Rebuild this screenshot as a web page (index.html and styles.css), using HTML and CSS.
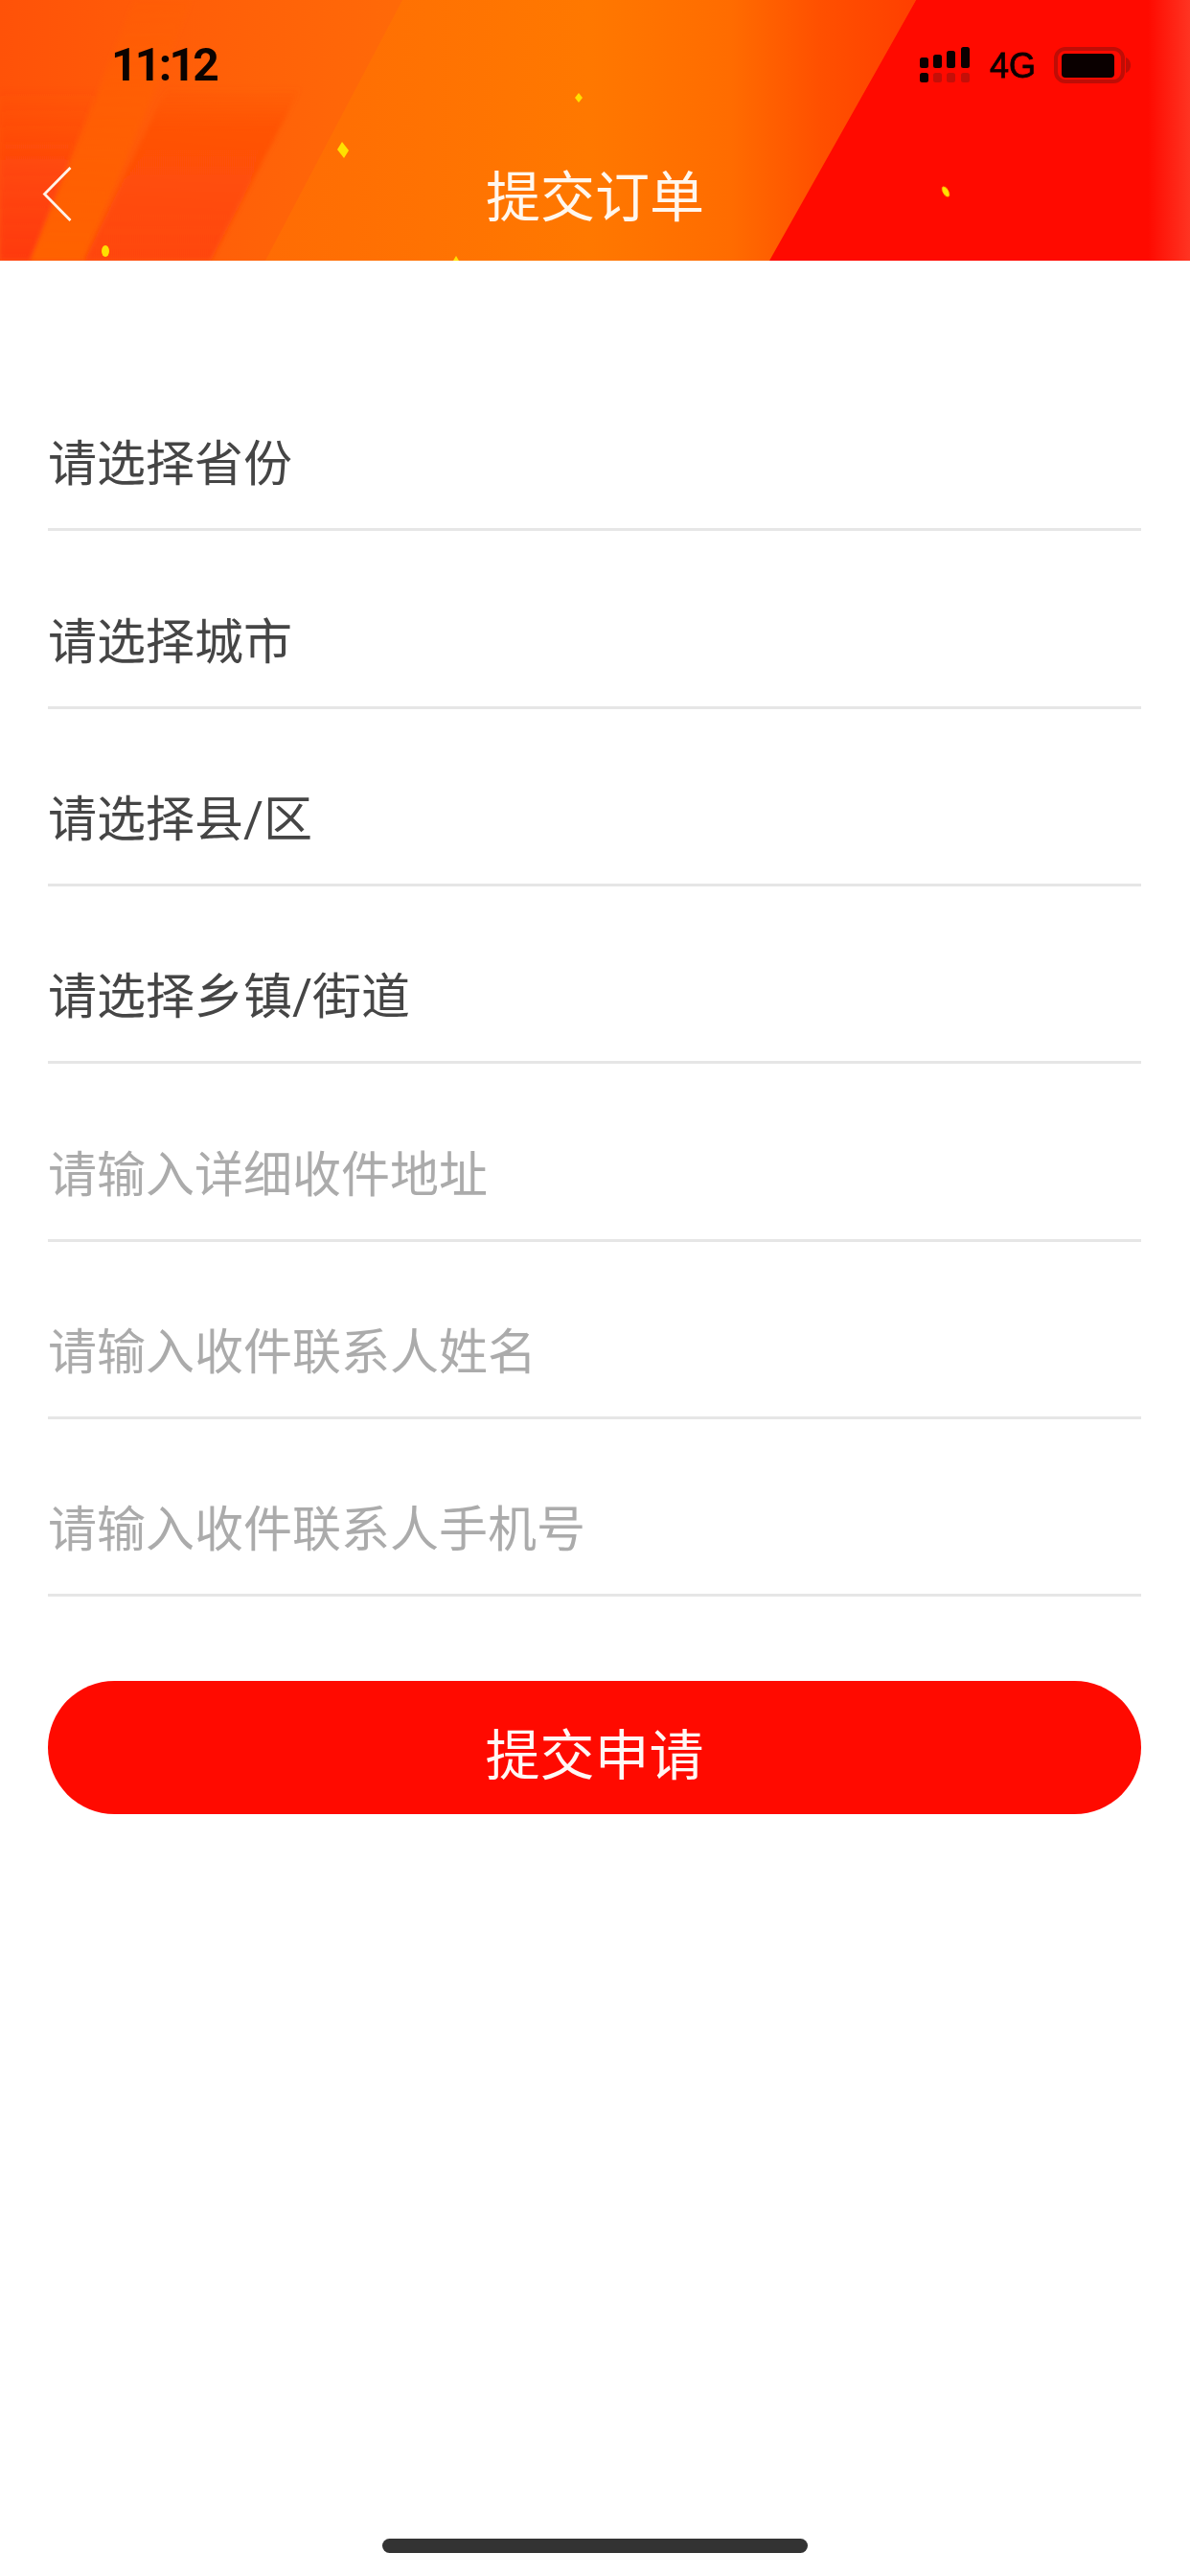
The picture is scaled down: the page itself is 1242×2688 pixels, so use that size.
FILE: index.html
```html
<!DOCTYPE html>
<html lang="zh-CN">
<head>
<meta charset="utf-8">
<title>提交订单</title>
<link rel="stylesheet" href="styles.css">
</head>
<body>
<div class="page">
  <header class="header">
    <svg class="header-bg" width="1242" height="272" viewBox="0 0 1242 272" aria-hidden="true">
      <defs>
        <linearGradient id="base" gradientUnits="userSpaceOnUse" x1="0" y1="0" x2="430" y2="0">
          <stop offset="0" stop-color="#ff5208"/>
          <stop offset="0.45" stop-color="#ff5e08"/>
          <stop offset="1" stop-color="#ff6a08"/>
        </linearGradient>
        <linearGradient id="main" gradientUnits="userSpaceOnUse" x1="277" y1="0" x2="950" y2="0">
          <stop offset="0" stop-color="#ff6c04"/>
          <stop offset="0.5" stop-color="#ff7800"/>
          <stop offset="0.72" stop-color="#ff6c00"/>
          <stop offset="0.86" stop-color="#ff5000"/>
          <stop offset="1" stop-color="#ff4000"/>
        </linearGradient>
        <linearGradient id="dark" x1="0" y1="0" x2="0" y2="1">
          <stop offset="0" stop-color="#ff4a08" stop-opacity="0"/>
          <stop offset="0.25" stop-color="#ff4e08" stop-opacity="0.75"/>
          <stop offset="1" stop-color="#ff4608"/>
        </linearGradient>
        <linearGradient id="light" x1="0" y1="0" x2="0" y2="1">
          <stop offset="0" stop-color="#ff6206" stop-opacity="0.2"/>
          <stop offset="1" stop-color="#ff6206"/>
        </linearGradient>
        <linearGradient id="wedge" x1="0" y1="0" x2="0" y2="1">
          <stop offset="0" stop-color="#ff3a10" stop-opacity="0"/>
          <stop offset="1" stop-color="#ff3a10"/>
        </linearGradient>
        <linearGradient id="edge" x1="0" y1="0" x2="1" y2="0">
          <stop offset="0" stop-color="#ff0a00"/>
          <stop offset="0.9" stop-color="#ff0a00"/>
          <stop offset="1" stop-color="#ff3422"/>
        </linearGradient>
        <filter id="soft" x="-20%" y="-20%" width="140%" height="140%"><feGaussianBlur stdDeviation="2.500"/></filter>
        <filter id="glow"><feGaussianBlur stdDeviation="0.700"/></filter>
      </defs>
      <rect width="1242" height="272" fill="url(#base)"/>
      <polygon points="0,272 32,272 105,90 0,90" fill="url(#wedge)" filter="url(#soft)"/>
      <polygon points="32,272 88,272 200,0 140,0" fill="url(#light)" filter="url(#soft)"/>
      <polygon points="88,272 220,272 315,90 175,90" fill="url(#dark)" filter="url(#soft)"/>
      <polygon points="277,272 420,0 956,0 803,272" fill="url(#main)"/>
      <polygon points="956,0 1242,0 1242,272 803,272" fill="url(#edge)"/>
      <g fill="#ffe000" filter="url(#glow)">
        <polygon points="357,148 364,157 359,165 352,156"/>
        <polygon points="604,97 608,102 604,107 600,102"/>
        <ellipse cx="110" cy="262" rx="4" ry="6"/>
        <ellipse cx="987" cy="200" rx="3" ry="6" transform="rotate(-30 987 200)"/>
        <polygon points="476,267 479,272 473,272"/>
      </g>
    </svg>
    <div class="status-bar">
      <span class="time">11:12</span>
      <div class="status-icons">
        <svg class="signal" width="52" height="38" viewBox="0 0 52 38" aria-hidden="true">
          <rect x="0" y="11" width="9" height="11" rx="2.500" fill="#0a0000"/>
          <rect x="14" y="8" width="9" height="14" rx="2.500" fill="#0a0000"/>
          <rect x="28" y="4" width="9" height="18" rx="2.500" fill="#0a0000"/>
          <rect x="43" y="0" width="9" height="22" rx="2.500" fill="#0a0000"/>
          <rect x="0" y="27" width="9" height="10" rx="2.500" fill="#0a0000"/>
          <rect x="14" y="27" width="9" height="10" rx="2.500" fill="#c40f08"/>
          <rect x="28" y="27" width="9" height="10" rx="2.500" fill="#c40f08"/>
          <rect x="43" y="27" width="9" height="10" rx="2.500" fill="#c40f08"/>
        </svg>
        <span class="network">4G</span>
        <svg class="battery" width="80" height="38" viewBox="0 0 80 38" aria-hidden="true">
          <rect x="2" y="2" width="70" height="34" rx="10" fill="none" stroke="#bf0d06" stroke-width="4"/>
          <rect x="8" y="7" width="55" height="25" rx="4" fill="#0a0000"/>
          <path d="M75 11c3 1 5 4 5 8s-2 7-5 8z" fill="#bf0d06"/>
        </svg>
      </div>
    </div>
    <nav class="nav">
      <span class="back">
        <svg width="32" height="60" viewBox="0 0 32 60" aria-hidden="true">
          <path d="M29.500 2 L2.500 29.500 L29.500 57" fill="none" stroke="#fff3e8" stroke-width="2.800"/>
        </svg>
      </span>
      <h1 class="title">提交订单</h1>
      <span class="nav-spacer"></span>
    </nav>
  </header>

  <main class="form">
    <div class="field">请选择省份</div>
    <div class="field">请选择城市</div>
    <div class="field">请选择县/区</div>
    <div class="field">请选择乡镇/街道</div>
    <div class="field field-empty">请输入详细收件地址</div>
    <div class="field field-empty">请输入收件联系人姓名</div>
    <div class="field field-empty">请输入收件联系人手机号</div>
    <button class="submit" type="button">提交申请</button>
  </main>

  <div class="home-indicator"></div>
</div>
</body>
</html>
```

FILE: styles.css
```css
* {
  box-sizing: border-box;
}

html,
body {
  margin: 0;
  padding: 0;
  background: #ffffff;
}

.page {
  width: 1242px;
  height: 2688px;
  display: flex;
  flex-direction: column;
  overflow: hidden;
  font-family: "Noto Sans CJK SC", "Liberation Sans", sans-serif;
}

.header {
  position: relative;
  flex: none;
  height: 272px;
  display: flex;
  flex-direction: column;
}

.header-bg {
  position: absolute;
  top: 0;
  left: 0;
}

.status-bar {
  position: relative;
  height: 136px;
  padding: 49px 62px 0 116px;
  display: flex;
  justify-content: space-between;
  align-items: flex-start;
}

.time {
  font-family: Roboto, "Liberation Sans", sans-serif;
  font-weight: 700;
  font-size: 48px;
  line-height: 38px;
  letter-spacing: -2.7px;
  color: #0c0300;
}

.status-icons {
  display: flex;
  align-items: flex-start;
}

.signal {
  display: block;
  margin-right: 21px;
}

.network {
  font-family: "Liberation Sans", sans-serif;
  font-size: 36px;
  line-height: 38px;
  margin-top: 1px;
  margin-right: 19px;
  color: #0c0000;
  -webkit-text-stroke: 0.8px #0c0000;
}

.battery {
  display: block;
}

.nav {
  position: relative;
  height: 136px;
  padding: 0 0 0 44px;
  display: grid;
  grid-template-columns: 1fr auto 1fr;
  align-items: start;
}

.back {
  display: block;
  height: 60px;
  margin-top: 37px;
}

.back svg {
  display: block;
}

.title {
  margin: 27px 0 0 -44px;
  font-size: 57px;
  font-weight: 400;
  line-height: 76px;
  color: #fff7ee;
}

.nav-spacer {
  display: block;
}

.form {
  flex: none;
  padding: 97px 51px 0 50px;
  display: flex;
  flex-direction: column;
}

.field {
  height: 185.33px;
  padding: 0 0 39px;
  display: flex;
  align-items: flex-end;
  font-family: Roboto, "Noto Sans CJK SC", sans-serif;
  font-size: 51px;
  line-height: 54px;
  color: #454545;
  border-bottom: 3px solid #e6e6e6;
}

.field-empty {
  color: #ababab;
}

.submit {
  height: 139px;
  margin-top: 88px;
  padding: 6px 0 0;
  border: 0;
  border-radius: 70px;
  background: #ff0a00;
  font-family: inherit;
  font-size: 57px;
  line-height: 76px;
  color: #fff7f5;
}

.home-indicator {
  flex: none;
  width: 444px;
  height: 15px;
  margin: auto auto 24px;
  border-radius: 8px;
  background: #333333;
}
```
